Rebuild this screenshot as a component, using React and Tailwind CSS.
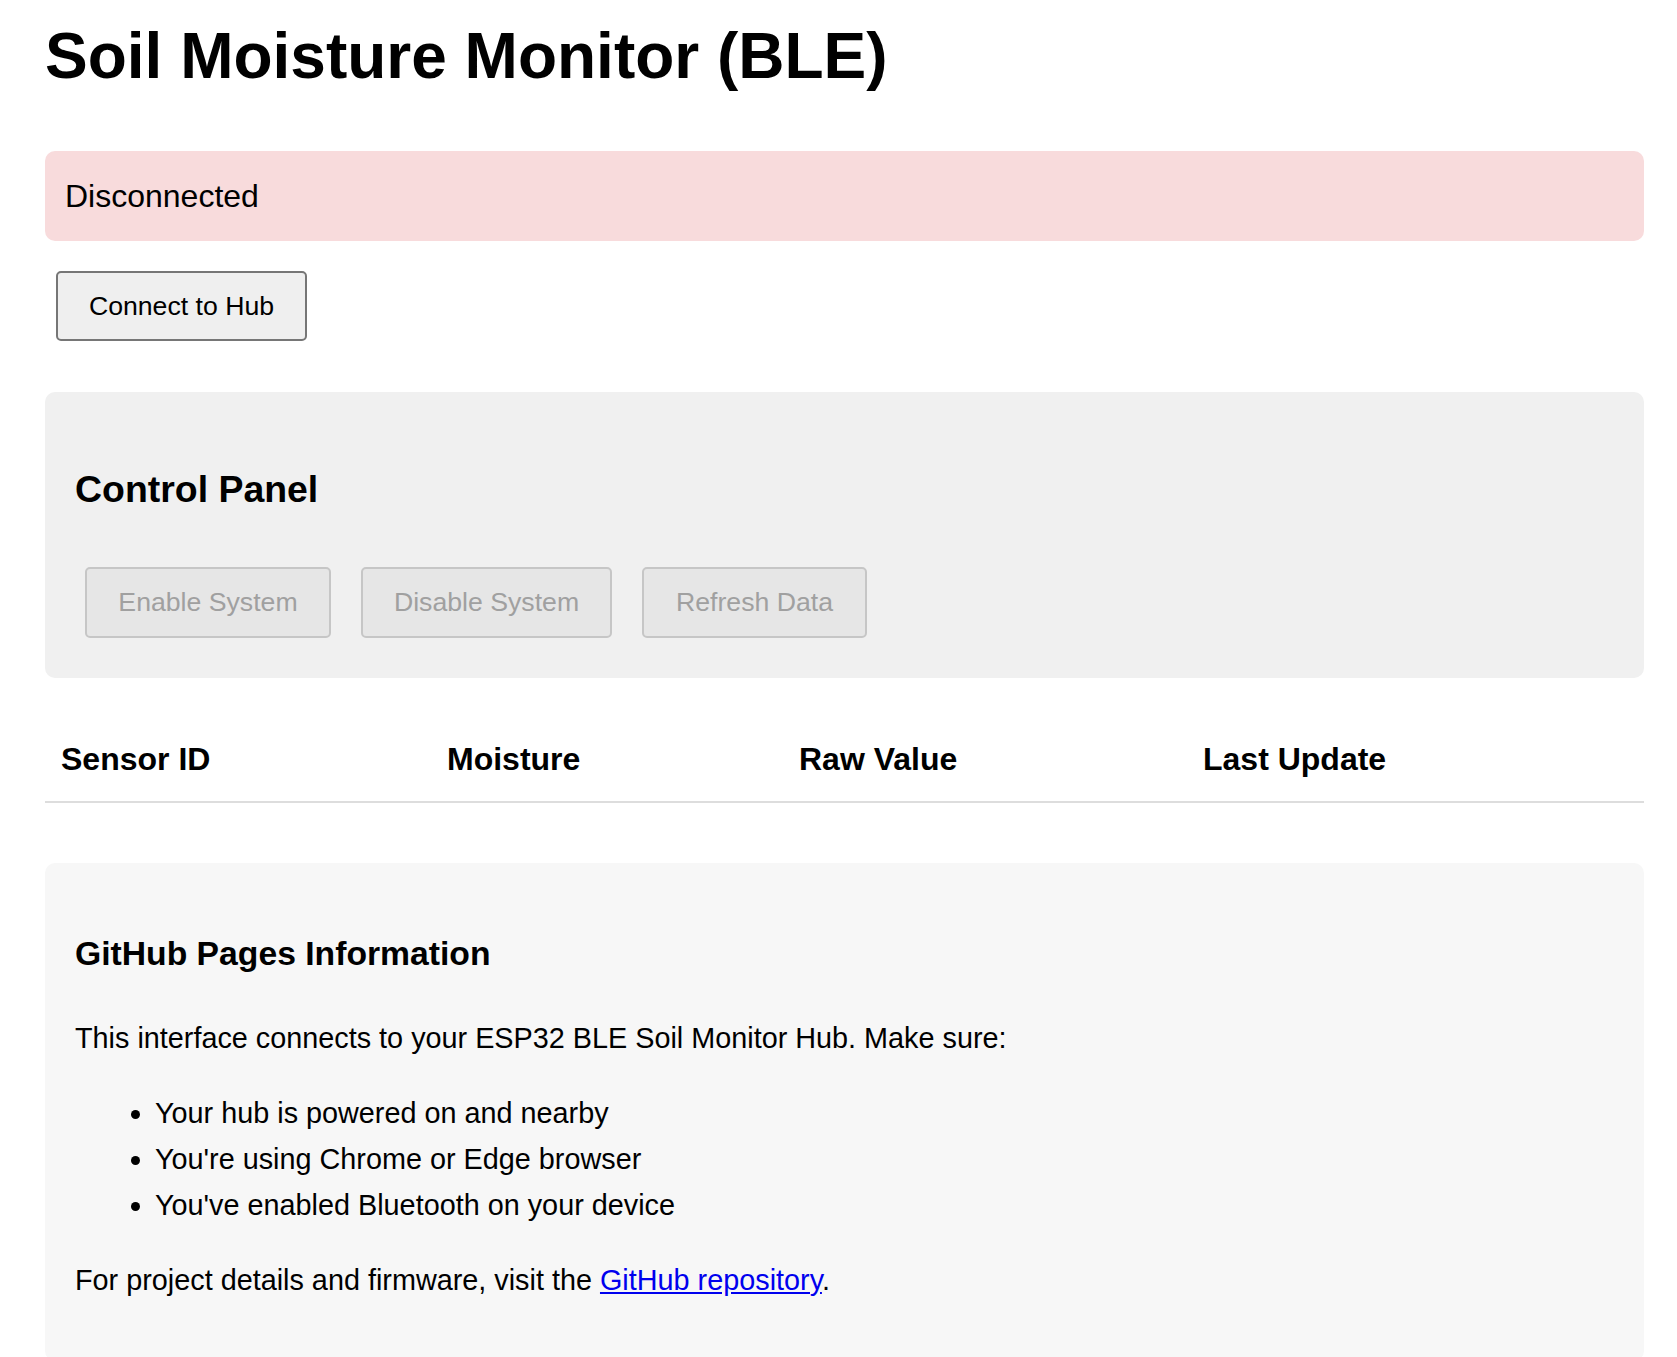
import React from 'react';

const SENSOR_COLUMNS = ['Sensor ID', 'Moisture', 'Raw Value', 'Last Update'];

const ControlButton = ({ label, width }) => (
    <button
        type="button"
        disabled
        className={`${width} h-[71px] border-2 border-[#c6c6c6] rounded-[5px] bg-[#e6e6e6] text-[#a0a0a0] text-[26.67px] leading-none`}
    >
        {label}
    </button>
);

const App = () => {
    return (
        <div className="min-h-screen bg-white text-black font-['Liberation_Sans',Arial,sans-serif] leading-[1.6] pl-[45px] pr-[33px] pt-[5px]">
            <h1 className="text-[64px] font-bold leading-[102.4px] mb-[44px]">Soil Moisture Monitor (BLE)</h1>

            <div className="h-[90px] flex items-center px-[20px] rounded-[10px] bg-[#f8dbdc] text-[32px]">
                Disconnected
            </div>

            <div className="mt-[30px] ml-[11px]">
                <button
                    type="button"
                    className="w-[251px] h-[70px] border-2 border-[#767676] rounded-[5px] bg-[#efefef] text-[26.67px] leading-none text-black"
                >
                    Connect to Hub
                </button>
            </div>

            {/* control panel */}
            <div className="mt-[51px] p-[30px] rounded-[10px] bg-[#f0f0f0]">
                <h3 className="text-[37.44px] font-bold leading-[1.6] mt-[37.44px] mb-[37.44px]">Control Panel</h3>
                {/* padding, not margin: the button row must not collapse into the h3 margin */}
                <div className="flex gap-[30px] pl-[10px] py-[10px]">
                    <ControlButton label="Enable System" width="w-[246px]" />
                    <ControlButton label="Disable System" width="w-[251px]" />
                    <ControlButton label="Refresh Data" width="w-[225px]" />
                </div>
            </div>

            {/* sensor table, no rows yet */}
            <div className="mt-[40px] grid grid-cols-[386px_352px_404px_1fr] border-b-2 border-[#dddddd]">
                {SENSOR_COLUMNS.map((col) => (
                    <div key={col} className="p-[16px] text-[32px] font-bold leading-[51.2px]">{col}</div>
                ))}
            </div>

            <div className="mt-[60px] p-[30px] rounded-[10px] bg-[#f7f7f7] text-[28.8px]">
                <h3 className="text-[33.7px] font-bold leading-[1.6] mt-[33.7px] mb-[33.7px]">GitHub Pages Information</h3>
                <p>This interface connects to your ESP32 BLE Soil Monitor Hub. Make sure:</p>
                <ul className="list-disc pl-[80px] my-[28.8px]">
                    <li>Your hub is powered on and nearby</li>
                    <li>You're using Chrome or Edge browser</li>
                    <li>You've enabled Bluetooth on your device</li>
                </ul>
                <p className="mb-[28.8px]">
                    For project details and firmware, visit the{' '}
                    <a href="#" className="text-[#0000ee] underline">GitHub repository</a>.
                </p>
            </div>
        </div>
    );
};

export default App;
